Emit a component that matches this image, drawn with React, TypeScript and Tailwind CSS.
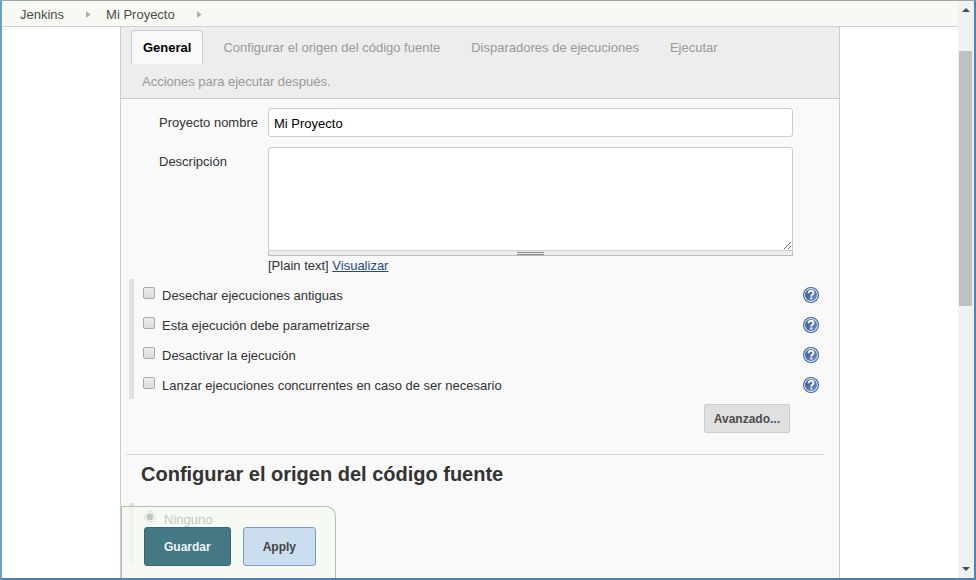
import React from "react";

const tabs = [
  "General",
  "Configurar el origen del código fuente",
  "Disparadores de ejecuciones",
  "Ejecutar",
  "Acciones para ejecutar después.",
];

const options = [
  { id: "discard", label: "Desechar ejecuciones antiguas" },
  { id: "params", label: "Esta ejecución debe parametrizarse" },
  { id: "disable", label: "Desactivar la ejecución" },
  { id: "concurrent", label: "Lanzar ejecuciones concurrentes en caso de ser necesario" },
];

function Chevron() {
  return (
    <svg width="5" height="7" viewBox="0 0 5 7" className="shrink-0" aria-hidden="true">
      <path d="M0 0 4.500 3.500 0 7z" fill="#adb0aa" />
    </svg>
  );
}

function HelpIcon() {
  return (
    <svg width="16" height="16" viewBox="0 0 16 16" aria-hidden="true">
      <defs>
        <linearGradient id="help-fill" x1="0" y1="0" x2="1" y2="1">
          <stop offset="0" stopColor="#2d5392" />
          <stop offset="1" stopColor="#6f93c8" />
        </linearGradient>
      </defs>
      <circle cx="8" cy="8" r="8" fill="#3c6199" />
      <circle cx="8" cy="8" r="6.900" fill="#e9eff8" />
      <circle cx="8" cy="8" r="6" fill="url(#help-fill)" />
      <path
        d="M5.600 6.200C5.600 4.500 6.600 3.800 8 3.800s2.500.8 2.500 2.200C10.500 7.600 8.300 7.500 8.300 9.400"
        fill="none"
        stroke="#fff"
        strokeWidth="1.900"
      />
      <rect x="7.300" y="10.500" width="2" height="1.900" fill="#fff" />
    </svg>
  );
}

function Breadcrumbs() {
  return (
    <nav className="flex h-[26px] shrink-0 items-center border-b border-[#d0d2ce] bg-[#f6faf2] pt-[2px] pl-[18px] text-[#4d4d4d]">
      <a href="#jenkins">Jenkins</a>
      <span className="pr-[15px] pl-[22px]">
        <Chevron />
      </span>
      <a href="#proyecto">Mi Proyecto</a>
      <span className="pl-[22px]">
        <Chevron />
      </span>
    </nav>
  );
}

function TabBar() {
  return (
    <div
      role="tablist"
      className="flex flex-wrap gap-x-[9px] border-b border-[#c8c8c8] bg-[#ededed] pt-[3px] pl-[10px]"
    >
      {tabs.map((tab, i) => (
        <button
          key={tab}
          type="button"
          role="tab"
          aria-selected={i === 0}
          className={
            i === 0
              ? "h-[34px] rounded-t border border-b-0 border-[#cfcfcf] bg-[#f9f9f9] px-[11px] font-bold text-black"
              : "h-[34px] border border-b-0 border-transparent px-[10px] text-[#999]"
          }
        >
          {tab}
        </button>
      ))}
    </div>
  );
}

function Scrollbar() {
  return (
    <div className="flex w-4 shrink-0 flex-col items-center bg-[#f1f1f1]" aria-hidden="true">
      <div className="flex h-[18px] items-center">
        <svg width="8" height="4" viewBox="0 0 8 4">
          <path d="M4 0 8 4H0z" fill="#4a4a4a" />
        </svg>
      </div>
      <div className="flex w-full grow flex-col pt-8 pr-[2px] pl-px">
        <div className="h-[50%] bg-[#c1c1c1]" />
      </div>
      <div className="flex h-[18px] items-center">
        <svg width="8" height="4" viewBox="0 0 8 4">
          <path d="M0 0H8L4 4z" fill="#4a4a4a" />
        </svg>
      </div>
    </div>
  );
}

export default function App() {
  return (
    <div className="flex h-screen overflow-hidden border-t border-r-2 border-b-2 border-l-2 border-t-[#a3a3a3] border-r-[#4b86b8] border-b-[#4b80b4] border-l-[#6f9cc8] bg-white font-['Liberation_Sans',Arial,sans-serif] text-[13px] leading-[18px] text-[#333]">
      <div className="flex min-w-0 grow flex-col">
        <Breadcrumbs />
        <main className="relative mx-auto w-full max-w-[720px] grow border-x border-[#cbcbcb] bg-[#f9f9f9]">
          <TabBar />
          <form onSubmit={(e) => e.preventDefault()}>
            <div className="grid grid-cols-[109px_1fr] gap-y-[10px] pt-[9px] pr-[46px] pl-[38px]">
              <label htmlFor="name" className="pt-[6px]">
                Proyecto nombre
              </label>
              <input
                id="name"
                type="text"
                defaultValue="Mi Proyecto"
                className="h-[29px] w-full rounded-[3px] border border-[#ccc] bg-white px-[5px] pt-[2px] text-black"
              />
              <label htmlFor="description" className="pt-[6px]">
                Descripción
              </label>
              <div>
                <textarea
                  id="description"
                  className="block h-[104px] w-full resize-y rounded-t-[3px] border border-[#ccc] bg-white p-[5px]"
                />
                <div className="flex h-[5px] items-center justify-center border border-t-0 border-[#bdbdbd] bg-[#eee]">
                  <div className="h-[3px] w-[27px] border-y border-[#888]" />
                </div>
                <p className="pt-px">
                  [Plain text]{" "}
                  <a href="#preview" className="text-[#204a87] underline">
                    Visualizar
                  </a>
                </p>
              </div>
            </div>

            <ul className="mt-1 mr-5 ml-2 border-l-[5px] border-[#e2e2e2] pl-[9px]">
              {options.map((o) => (
                <li key={o.id} className="flex h-[30px] items-center">
                  <input
                    id={o.id}
                    type="checkbox"
                    className="mb-[2px] h-3 w-3 appearance-none rounded-[2px] border border-[#aaa] bg-linear-to-b from-[#ededed] to-[#dcdcdc]"
                  />
                  <label htmlFor={o.id} className="grow pt-[3px] pl-[7px]">
                    {o.label}
                  </label>
                  <a href="#help" aria-label="Ayuda" className="pt-[2px]">
                    <HelpIcon />
                  </a>
                </li>
              ))}
            </ul>

            <div className="flex justify-end pt-[5px] pr-[49px]">
              <button
                type="button"
                className="h-[29px] rounded-[2px] border border-[#ccc] bg-[#e0e0e0] px-[9px] text-[12px] font-bold text-[#4d4d4d]"
              >
                Avanzado...
              </button>
            </div>

            <section className="mt-[21px] mr-[15px] ml-[5px] border-t border-[#d9d9d9]">
              <h2 className="pt-[7px] pl-[15px] text-[20px] leading-6 font-bold">
                Configurar el origen del código fuente
              </h2>
              <div className="mt-[17px] ml-[3px] flex h-[60px] items-start border-l-[5px] border-[#e2e2e2] pt-2 pl-[10px]">
                <input
                  id="none"
                  type="radio"
                  name="scm"
                  defaultChecked
                  className="h-3 w-3 appearance-none rounded-full border border-[#aaa] bg-[radial-gradient(circle,#333_3px,#e8e8e8_4px)]"
                />
                <label htmlFor="none" className="pl-2">
                  Ninguno
                </label>
              </div>
            </section>

            <div className="absolute bottom-0 left-0 flex gap-3 rounded-tr-[10px] border-t border-r border-l border-[#aec0b6] bg-[#f4f9f0]/75 pt-5 pr-[19px] pb-3 pl-[22px]">
              <button
                type="submit"
                className="h-[39px] rounded-[3px] border border-[#3a6573] bg-[#457885] px-[19px] text-[12px] font-bold text-[#eef6f8]"
              >
                Guardar
              </button>
              <button
                type="button"
                className="h-[39px] rounded-[3px] border border-[#7d9bc0] bg-[#cbdef0] px-[19px] text-[12px] font-bold text-[#444]"
              >
                Apply
              </button>
            </div>
          </form>
        </main>
      </div>
      <Scrollbar />
    </div>
  );
}
